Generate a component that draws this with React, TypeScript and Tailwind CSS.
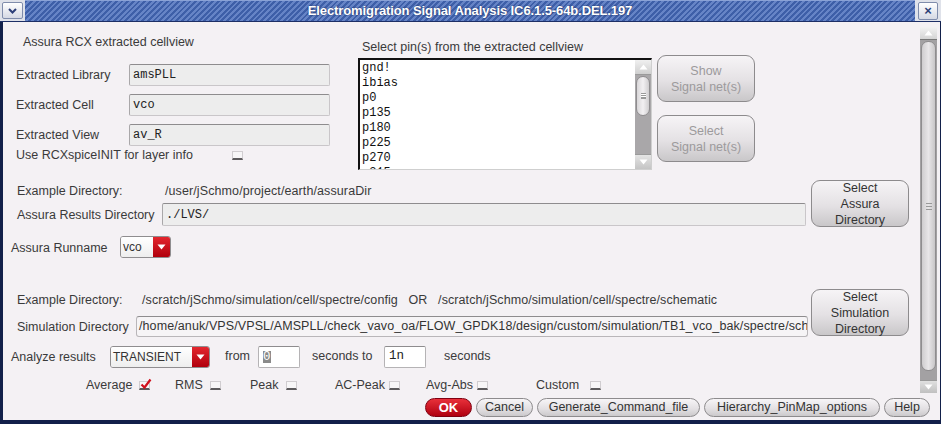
import React from "react";

const sans = "font-['Liberation_Sans',Arial,sans-serif]";
const mono = "font-['Liberation_Mono','Courier_New',monospace]";

const Field = ({ text, w, h = "h-[22px]" }: { text: string; w: string; h?: string }) => (
  <div
    className={`${w} ${h} ${mono} text-[12px] text-[#222] bg-[#ededed] border border-[#c9c6c9] border-t-[#8e8c8e] border-l-[#a9a7a9] rounded-[2px] px-[3px] flex items-center overflow-hidden whitespace-nowrap`}
  >
    {text}
  </div>
);

const Check = ({ checked = false }: { checked?: boolean }) => (
  <div className="relative w-[11px] h-[9px] bg-[#f7f6f7] border border-[#d0cdd0] border-b-2 border-b-[#5c5a5c] shrink-0">
    {checked && (
      <svg className="absolute left-[0px] top-[-4px]" width="12" height="12" viewBox="0 0 12 12">
        <path d="M1.5 6.5 L4.5 9.5 L10.5 1.5" fill="none" stroke="#d0101c" strokeWidth="2.2" />
      </svg>
    )}
  </div>
);

const Btn = ({ lines, disabled = false }: { lines: string[]; disabled?: boolean }) => (
  <div
    className={`w-[98px] h-[47px] rounded-[9px] border border-[#8d8b8d] bg-[linear-gradient(#f6f4f6,#e4e1e4_55%,#c9c7c9)] flex flex-col items-center justify-center text-[12.5px] leading-[16px] ${sans} ${
      disabled ? "text-[#9c9a9c]" : "text-[#333]"
    }`}
  >
    {lines.map((l) => (
      <span key={l}>{l}</span>
    ))}
  </div>
);

const Combo = ({ text, w }: { text: string; w: string }) => (
  <div className={`${w} h-[22px] flex rounded-[3px] border border-[#8f8d8f] overflow-hidden`}>
    <div className={`flex-1 bg-[linear-gradient(#ffffff,#eeeeee)] ${sans} text-[12px] text-[#333] flex items-center pl-[2px]`}>
      {text}
    </div>
    <div className="w-[17px] bg-[linear-gradient(#e3262e,#b0000c)] flex items-center justify-center">
      <svg width="9" height="6" viewBox="0 0 9 6">
        <path d="M0.5 0.5 L8.5 0.5 L4.5 5.5 Z" fill="#ffffff" />
      </svg>
    </div>
  </div>
);

const SmallBtn = ({ label, w }: { label: string; w: string }) => (
  <div
    className={`${w} h-[19px] rounded-full border border-[#8d8b8d] bg-[linear-gradient(#f7f5f7,#e2dfe2_60%,#cbc9cb)] flex items-center justify-center text-[12.5px] text-[#333] ${sans}`}
  >
    {label}
  </div>
);

const pins = ["gnd!", "ibias", "p0", "p135", "p180", "p225", "p270", "p315"];

export default function App() {
  return (
    <div className={`w-[941px] h-[424px] bg-[#12204a] flex flex-col overflow-hidden ${sans}`}>
      {/* title bar */}
      <div className="h-[22px] flex items-stretch bg-[#dfe2ea] border-b border-[#1d2f66]">
        <div className="w-[25px] flex items-center justify-center">
          <div className="w-[21px] h-[17px] rounded-[2px] border border-[#7f8cab] bg-[linear-gradient(#ffffff,#d5d9e4)] flex items-center justify-center">
            <svg width="9" height="6" viewBox="0 0 9 6">
              <path d="M1 1 L4.5 4.5 L8 1" fill="none" stroke="#2d3f78" strokeWidth="2" />
            </svg>
          </div>
        </div>
        <div className="flex-1 border-t border-[#8aa2d6] bg-[repeating-linear-gradient(135deg,#3e5fa8_0px,#3e5fa8_2px,#6684c6_2px,#6684c6_4px)] flex items-center justify-center">
          <span className="text-white font-bold text-[13px] tracking-[-0.1px] [text-shadow:0_0_2px_#1a2a5a]">
            Electromigration Signal Analysis IC6.1.5-64b.DEL.197
          </span>
        </div>
        <div className="w-[26px] flex items-center justify-center">
          <div className="w-[20px] h-[18px] rounded-[2px] border border-[#7f8cab] bg-[linear-gradient(#ffffff,#d5d9e4)] flex items-center justify-center text-[#2d3f78] text-[13px] font-bold leading-none">
            ×
          </div>
        </div>
      </div>

      {/* body */}
      <div className="h-[398px] ml-[3px] mr-[1px] bg-[#f4f1f4] flex flex-col text-[12.5px] text-[#3a3a3a]">
        <div className="flex">
          <div className="w-[917px] flex flex-col">
            {/* upper section */}
            <div className="flex h-[148px]">
              <div className="w-[337px] flex flex-col">
                <div className="ml-[20px] mt-[13px] h-[14px] leading-[14px]">Assura RCX extracted cellview</div>
                <div className="flex items-center mt-[15px] ml-[13px]">
                  <span className="w-[113px] pt-[1px]">Extracted Library</span>
                  <Field text="amsPLL" w="w-[201px]" />
                </div>
                <div className="flex items-center mt-[8px] ml-[13px]">
                  <span className="w-[113px] pt-[1px]">Extracted Cell</span>
                  <Field text="vco" w="w-[201px]" />
                </div>
                <div className="flex items-center mt-[8px] ml-[13px]">
                  <span className="w-[113px] pt-[1px]">Extracted View</span>
                  <Field text="av_R" w="w-[201px]" />
                </div>
                <div className="flex items-center mt-[2px] ml-[13px] h-[15px]">
                  <span className="w-[216px]">Use RCXspiceINIT for layer info</span>
                  <Check />
                </div>
              </div>

              <div className="ml-[18px] flex flex-col">
                <div className="mt-[18px] h-[14px] leading-[14px] ml-[4px]">Select pin(s) from the extracted cellview</div>
                <div className="mt-[4px] w-[294px] h-[112px] bg-white border-t-2 border-l-2 border-[#111] border-r border-b border-r-[#cfcfcf] border-b-[#cfcfcf] flex overflow-hidden">
                  <div className={`flex-1 pl-[2px] pt-[1px] ${mono} text-[12px] leading-[15px] text-[#111]`}>
                    {pins.map((p) => (
                      <div key={p}>{p}</div>
                    ))}
                  </div>
                  <div className="w-[16px] bg-[#a9a7a9] flex flex-col">
                    <div className="h-[15px] bg-[linear-gradient(#f0f0f0,#cfcfcf)] flex items-center justify-center border-b border-[#9a9a9a]">
                      <svg width="9" height="6" viewBox="0 0 9 6">
                        <path d="M0.5 5.5 L8.5 5.5 L4.5 0.5 Z" fill="#ffffff" />
                      </svg>
                    </div>
                    <div className="mx-[1px] mt-[1px] h-[40px] rounded-[7px] border border-[#8f8d8f] bg-[linear-gradient(90deg,#d9d7d9,#f2f0f2,#d0ced0)] flex items-center justify-center">
                      <div className="w-[5px] h-[6px] border-y border-[#999] bg-[linear-gradient(#fff_0,#fff_1px,#999_1px,#999_2px,#fff_2px,#fff_3px,#999_3px,#999_4px,#fff_4px)]" />
                    </div>
                    <div className="flex-1" />
                    <div className="h-[15px] bg-[linear-gradient(#e4e4e4,#c4c4c4)] flex items-center justify-center border-t border-[#9a9a9a]">
                      <svg width="9" height="6" viewBox="0 0 9 6">
                        <path d="M0.5 0.5 L8.5 0.5 L4.5 5.5 Z" fill="#ffffff" />
                      </svg>
                    </div>
                  </div>
                </div>
              </div>

              <div className="ml-[5px] flex flex-col">
                <div className="mt-[33px]">
                  <Btn lines={["Show", "Signal net(s)"]} disabled />
                </div>
                <div className="mt-[13px]">
                  <Btn lines={["Select", "Signal net(s)"]} disabled />
                </div>
              </div>
            </div>

            {/* assura directory */}
            <div className="flex">
              <div className="w-[808px] flex flex-col">
                <div className="mt-[14px] ml-[14px] h-[14px] leading-[14px] flex">
                  <span className="w-[148px]">Example Directory:</span>
                  <span className="tracking-[0.1px]">/user/jSchmo/project/earth/assuraDir</span>
                </div>
                <div className="mt-[5px] ml-[14px] flex items-center">
                  <span className="w-[145px] pt-[1px]">Assura Results Directory</span>
                  <Field text=" ./LVS/" w="w-[644px]" h="h-[23px]" />
                </div>
              </div>
              <div className="mt-[10px]">
                <Btn lines={["Select", "Assura", "Directory"]} />
              </div>
            </div>

            {/* runname */}
            <div className="mt-[9px] ml-[8px] flex items-center">
              <span className="w-[109px] pt-[2px]">Assura Runname</span>
              <Combo text="vco" w="w-[51px]" />
            </div>

            {/* simulation directory */}
            <div className="flex mt-[31px]">
              <div className="w-[808px] flex flex-col">
                <div className="mt-[4px] ml-[14px] h-[14px] leading-[14px] flex whitespace-nowrap">
                  <span className="w-[125px]">Example Directory:</span>
                  <span className="tracking-[0.08px]">/scratch/jSchmo/simulation/cell/spectre/config&nbsp;&nbsp;&nbsp;OR&nbsp;&nbsp;&nbsp;/scratch/jSchmo/simulation/cell/spectre/schematic</span>
                </div>
                <div className="mt-[9px] ml-[14px] flex items-center">
                  <span className="w-[119px] pt-[1px]">Simulation Directory</span>
                  <div className="w-[672px] h-[21px] bg-[#f6f4f6] border border-[#b9b6b9] border-t-[#8e8c8e] rounded-[3px] px-[2px] flex items-center overflow-hidden whitespace-nowrap text-[12.5px] tracking-[0.1px] text-[#333]">
                    /home/anuk/VPS/VPSL/AMSPLL/check_vavo_oa/FLOW_GPDK18/design/custom/simulation/TB1_vco_bak/spectre/schematic
                  </div>
                </div>
              </div>
              <div>
                <Btn lines={["Select", "Simulation", "Directory"]} />
              </div>
            </div>

            {/* analyze */}
            <div className="mt-[8px] ml-[8px] flex items-center h-[23px]">
              <span className="w-[99px] pt-[2px]">Analyze results</span>
              <Combo text="TRANSIENT" w="w-[100px]" />
              <span className="ml-[15px] w-[33px]">from</span>
              <div className={`w-[42px] h-[22px] bg-white border border-[#b5b3b5] border-t-[#8e8c8e] rounded-[2px] flex items-center pl-[4px] ${mono}`}>
                <span className="bg-[#8a8a8a] text-white leading-[12px]">0</span>
              </div>
              <span className="ml-[12px] w-[72px]">seconds to</span>
              <div className={`w-[42px] h-[22px] bg-white border border-[#b5b3b5] border-t-[#8e8c8e] rounded-[2px] flex items-center pl-[4px] ${mono} text-[#222]`}>
                1n
              </div>
              <span className="ml-[18px]">seconds</span>
            </div>

            {/* checkboxes */}
            <div className="mt-[10px] h-[15px] flex items-center ml-[83px]">
              <div className="w-[89px] flex items-center">
                <span>Average</span>
                <span className="ml-[7px]"><Check checked /></span>
              </div>
              <div className="w-[75px] flex items-center">
                <span>RMS</span>
                <span className="ml-[7px]"><Check /></span>
              </div>
              <div className="w-[85px] flex items-center">
                <span>Peak</span>
                <span className="ml-[7px]"><Check /></span>
              </div>
              <div className="w-[91px] flex items-center">
                <span>AC-Peak</span>
                <span className="ml-[4px]"><Check /></span>
              </div>
              <div className="w-[110px] flex items-center">
                <span>Avg-Abs</span>
                <span className="ml-[4px]"><Check /></span>
              </div>
              <div className="flex items-center">
                <span>Custom</span>
                <span className="ml-[11px]"><Check /></span>
              </div>
            </div>
          </div>

          {/* window scrollbar */}
          <div className="w-[17px] mt-[5px] h-[366px] bg-[#a3a1a3] flex flex-col">
            <div className="h-[13px] bg-[linear-gradient(#f2f2f2,#d4d4d4)] flex items-center justify-center border-b border-[#777]">
              <svg width="9" height="6" viewBox="0 0 9 6">
                <path d="M0.5 5.5 L8.5 5.5 L4.5 0.5 Z" fill="#ffffff" />
              </svg>
            </div>
            <div className="mx-[1px] mt-[1px] h-[330px] rounded-[7px] border border-[#8f8d8f] bg-[linear-gradient(90deg,#cfcdcf,#e8e6e8,#c8c6c8)] flex items-center justify-center">
              <div className="w-[6px] h-[7px] bg-[linear-gradient(#999_0,#999_1px,transparent_1px,transparent_3px,#999_3px,#999_4px,transparent_4px,transparent_6px,#999_6px,#999_7px)]" />
            </div>
            <div className="flex-1" />
            <div className="h-[13px] bg-[linear-gradient(#e0e0e0,#c0c0c0)] flex items-center justify-center border-t border-[#999]">
              <svg width="9" height="6" viewBox="0 0 9 6">
                <path d="M0.5 0.5 L8.5 0.5 L4.5 5.5 Z" fill="#ffffff" />
              </svg>
            </div>
          </div>
        </div>

        {/* bottom buttons */}
        <div className="mt-[5px] ml-[422px] flex gap-[4px]">
          <div className="w-[47px] h-[19px] rounded-full bg-[linear-gradient(#e8303a,#b00010)] border border-[#800010] flex items-center justify-center text-white font-bold text-[13px]">
            OK
          </div>
          <SmallBtn label="Cancel" w="w-[57px]" />
          <SmallBtn label="Generate_Command_file" w="w-[163px]" />
          <SmallBtn label="Hierarchy_PinMap_options" w="w-[176px]" />
          <SmallBtn label="Help" w="w-[46px]" />
        </div>
      </div>
    </div>
  );
}
